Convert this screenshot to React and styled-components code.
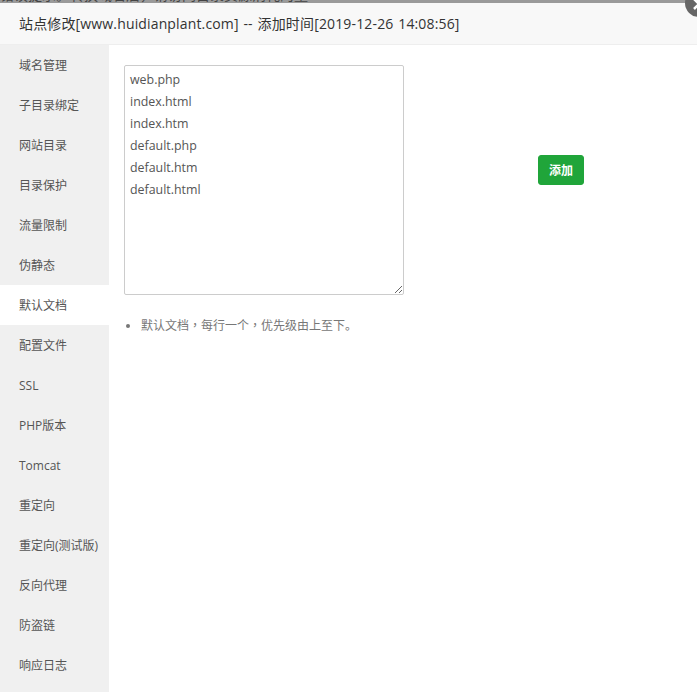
import React from 'react';
import styled, { createGlobalStyle } from 'styled-components';

const Global = createGlobalStyle`
  html, body { margin: 0; padding: 0; background: #fff; }
  body { font-family: "Open Sans", "Noto Sans CJK SC", sans-serif; overflow: hidden; }
`;

const Page = styled.div`
  position: relative;
  width: 697px;
  height: 692px;
  overflow: hidden;
  background: #fff;
`;

const Backdrop = styled.div`
  height: 3px;
  background: #9a9a9a;
  overflow: hidden;
`;

const BackdropText = styled.div`
  margin-top: -13px;
  font-size: 14px;
  line-height: 15px;
  white-space: nowrap;
  color: #444;
`;

const TitleBar = styled.div`
  height: 42px;
  box-sizing: border-box;
  padding-left: 19px;
  line-height: 42px;
  font-size: 14px;
  letter-spacing: 0.15px;
  word-spacing: 1px;
  color: #333;
  background: #f8f8f8;
  border-bottom: 1px solid #eee;
`;

const Body = styled.div`
  display: flex;
`;

const Side = styled.ul`
  list-style: none;
  margin: 0;
  padding: 0;
  width: 109px;
  height: 647px;
  background: #f0f0f0;
  flex-shrink: 0;
`;

const SideItem = styled.li`
  height: 40px;
  line-height: 42px;
  padding-left: 19px;
  font-size: 12px;
  color: #555;
  background: ${p => (p.$active ? '#fff' : 'transparent')};
`;

const Content = styled.div`
  flex: 1;
  padding: 20px 0 0 15px;
`;

const Row = styled.div`
  display: flex;
  align-items: flex-start;
`;

const DocList = styled.textarea`
  display: block;
  box-sizing: border-box;
  width: 280px;
  height: 230px;
  padding: 3px 5px;
  border: 1px solid #ccc;
  border-radius: 2px;
  font-family: inherit;
  font-size: 12.4px;
  line-height: 22px;
  color: #555;
  outline: none;
`;

const AddButton = styled.button`
  margin: 90px 0 0 134px;
  width: 46px;
  height: 30px;
  padding: 0;
  border: 1px solid #20a53a;
  border-radius: 3px;
  background: #20a53a;
  color: #fff;
  font-family: inherit;
  font-size: 12px;
  font-weight: 700;
`;

const Tips = styled.ul`
  margin: 22px 0 0;
  padding: 0 0 0 17px;
  font-size: 12px;
  line-height: 16px;
  color: #777;
`;

const Comma = styled.span`
  font-family: "Noto Sans CJK TC", sans-serif;
`;

const Close = styled.div`
  position: absolute;
  top: -11px;
  left: 685px;
  width: 28px;
  height: 28px;
  border-radius: 50%;
  background: #666;
`;

const menu = ['域名管理', '子目录绑定', '网站目录', '目录保护', '流量限制', '伪静态', '默认文档', '配置文件', 'SSL', 'PHP版本', 'Tomcat', '重定向', '重定向(测试版)', '反向代理', '防盗链', '响应日志'];
const docs = 'web.php\nindex.html\nindex.htm\ndefault.php\ndefault.htm\ndefault.html';

export default function App() {
  return (
    <Page>
      <Global />
      <Backdrop>
        <BackdropText>错误提示。转换域名后，请访问目录资源消耗的量</BackdropText>
      </Backdrop>
      <TitleBar>站点修改[www.huidianplant.com] -- 添加时间[2019-12-26 14:08:56]</TitleBar>
      <Body>
        <Side>
          {menu.map(m => <SideItem key={m} $active={m === '默认文档'}>{m}</SideItem>)}
        </Side>
        <Content>
          <Row>
            <DocList defaultValue={docs} />
            <AddButton>添加</AddButton>
          </Row>
          <Tips><li>默认文档<Comma>，</Comma>每行一个<Comma>，</Comma>优先级由上至下。</li></Tips>
        </Content>
      </Body>
      <Close>
        <svg width="28" height="28" viewBox="0 0 28 28"><path d="M9 10l5 5 5-5M9 20l5-5 5 5" stroke="#fff" strokeWidth="2.5" fill="none" /></svg>
      </Close>
    </Page>
  );
}
